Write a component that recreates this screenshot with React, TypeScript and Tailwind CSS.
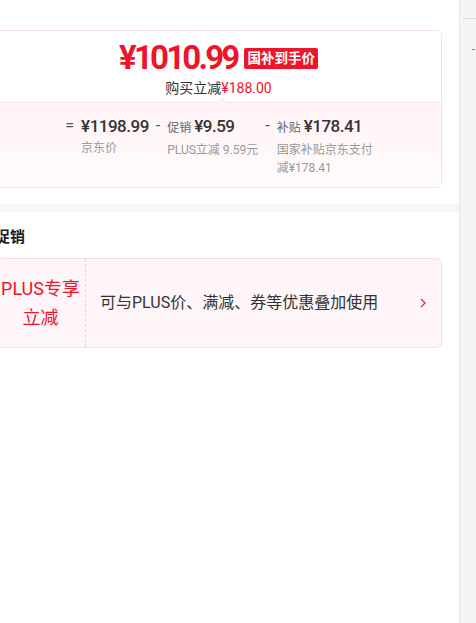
import React from "react";

const RED = "text-[#f0142a]";

function PriceItem({
    op,
    label,
    price,
    sub,
}: {
    op: string;
    label?: string;
    price: string;
    sub: React.ReactNode;
}) {
    return (
        <div className="flex items-start">
            <span className="mr-[7px] text-[16px] leading-[24px] text-[#555]">{op}</span>
            <div className="flex flex-col">
                <div className="flex items-baseline leading-[24px]">
                    {label && <span className="mr-[3px] text-[12px] text-[#666]">{label}</span>}
                    <span className="text-[17px] font-medium tracking-[-0.5px] text-[#333]">{price}</span>
                </div>
                <div className="mt-px max-w-[98px] text-[12px] leading-[18px] text-[#999]">{sub}</div>
            </div>
        </div>
    );
}

export default function App() {
    return (
        <div className="flex min-h-[623px] bg-white" style={{ fontFamily: "Roboto, 'Noto Sans CJK SC', sans-serif" }}>
            {/* main column */}
            <div className="w-[459px] shrink-0 overflow-hidden">
                <div className="ml-[-5px] w-[447px] pt-[30px]">
                    {/* price card */}
                    <div className="overflow-hidden rounded-[6px] border border-[#f3e3e6]">
                        <div className="flex h-[71px] flex-col items-center bg-white pt-[8px]">
                            <div className="flex items-center">
                                <span className={`${RED} text-[33px] font-bold leading-[38px] tracking-[-2.8px]`}>¥1010.99</span>
                                <span className="ml-[7px] rounded-[2px] bg-[#f0142a] px-[3px] text-[13.5px] font-bold leading-[21px] text-white">国补到手价</span>
                            </div>
                            <div className="mt-px text-[14px] leading-[20px] text-[#333]">
                                购买立减<span className={RED}>¥188.00</span>
                            </div>
                        </div>
                        <div className="relative border-t border-[#f6e6e9] bg-gradient-to-b from-[#fff3f5] to-[#fffcfc] pb-[10px] pt-[11px]">
                            <div className="absolute left-[223px] top-[-4px] h-[6px] w-[6px] rotate-45 border-l border-t border-[#f6e6e9] bg-[#fff3f5]" />
                            <div className="flex justify-center gap-[7px] pl-[3px]">
                                <PriceItem op="=" price="¥1198.99" sub="京东价" />
                                <PriceItem op="-" label="促销" price="¥9.59" sub="PLUS立减 9.59元" />
                                <PriceItem op="-" label="补贴" price="¥178.41" sub="国家补贴京东支付减¥178.41" />
                            </div>
                        </div>
                    </div>
                </div>

                <div className="mt-[16px] h-[8px] bg-[#f6f6f9]" />

                <div className="ml-[-5px] w-[447px]">
                    <div className="pt-[15px] text-[15px] font-bold leading-[20px] text-[#1a1a1a]">促销</div>
                    <div className="mt-[11px] flex h-[90px] items-stretch overflow-hidden rounded-[6px] border border-[#f5dfe3] bg-[#fdf5f7]">
                        <div className={`flex w-[90px] shrink-0 flex-col items-center justify-center border-r border-dashed border-[#f0cfd6] text-center ${RED} text-[18px] leading-[29px]`}>
                            <span>PLUS专享</span>
                            <span>立减</span>
                        </div>
                        <div className="flex flex-1 items-center justify-between pl-[14px] pr-[12px]">
                            <span className="text-[16px] text-[#333]">可与PLUS价、满减、券等优惠叠加使用</span>
                            <svg width="8" height="12" viewBox="0 0 8 12" className="mr-[2px]">
                                <path d="M2 2l4 4-4 4" fill="none" stroke="#d2333c" strokeWidth="1.3" />
                            </svg>
                        </div>
                    </div>
                </div>
            </div>

            {/* side panel */}
            <div className="flex-1 border-l border-[#e6e6e6] bg-[#f5f5f5]">
                <div className="ml-[3px] mt-[18px] h-px bg-[#dcdcdc]" />
                <div className="ml-[12px] mt-[30px] h-px w-[3px] bg-[#888]" />
            </div>
        </div>
    );
}
